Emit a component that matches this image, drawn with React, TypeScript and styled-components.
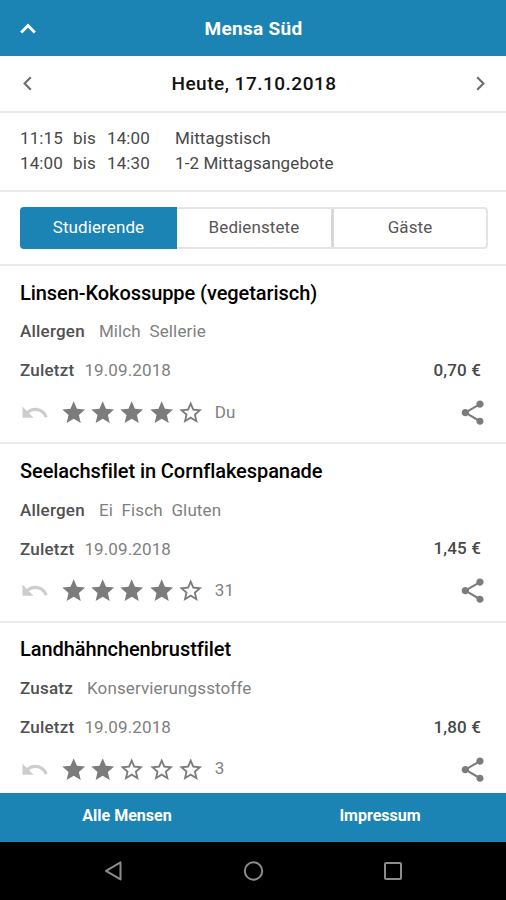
import React from "react";
import styled, { createGlobalStyle } from "styled-components";

const BLUE = "#1b84b5";

const GlobalStyle = createGlobalStyle`
  * { box-sizing: border-box; }
  body { margin: 0; background: #fff; font-family: Roboto, "Liberation Sans", sans-serif; }
  svg { display: block; flex: none; }
`;

const Screen = styled.div`
  display: flex;
  flex-direction: column;
  width: 506px;
  height: 900px;
  overflow: hidden;
  background: #fff;
  color: #111;
`;

const Header = styled.header`
  display: grid;
  grid-template-columns: 40px 1fr 40px;
  align-items: center;
  flex: none;
  height: 56px;
  padding: 1px 7px 0 8px;
  background: ${BLUE};
  color: #fff;
  svg { justify-self: center; }
`;

const Title = styled.h1`
  margin: 0;
  text-align: center;
  font-size: 19px;
  font-weight: 700;
  line-height: 24px;
  letter-spacing: 0.3px;
`;

const DateBar = styled.div`
  display: grid;
  grid-template-columns: 40px 1fr 40px;
  align-items: center;
  flex: none;
  height: 57px;
  padding: 0 5px 0 7px;
  border-bottom: 2px solid #ebebeb;
  svg { justify-self: center; }
`;

const DateLabel = styled.div`
  text-align: center;
  font-size: 19px;
  font-weight: 500;
  line-height: 24px;
  letter-spacing: 0.5px;
`;

const Hours = styled.div`
  display: grid;
  grid-template-columns: 53px 34px 68px 1fr;
  grid-auto-rows: 25px;
  flex: none;
  height: 79px;
  padding: 13px 20px 0;
  border-bottom: 2px solid #ebebeb;
  color: #484848;
  font-size: 17px;
  line-height: 25px;
  letter-spacing: 0.1px;
`;

const Time = styled.span`
  white-space: nowrap;
`;

const TabBar = styled.div`
  flex: none;
  height: 74px;
  padding: 15px 18px 0 20px;
  border-bottom: 2px solid #ebebeb;
`;

const Tabs = styled.div`
  display: grid;
  grid-template-columns: 155px 154px 1fr;
  height: 42px;
  border: 2px solid #e4e4e4;
  border-radius: 4px;
`;

const Tab = styled.button<{ $active?: boolean }>`
  margin: ${(p) => (p.$active ? "-2px 0 -2px -2px" : "0")};
  padding: 0 0 2px;
  border: 0;
  border-radius: ${(p) => (p.$active ? "4px 0 0 4px" : "0")};
  background: ${(p) => (p.$active ? BLUE : "transparent")};
  color: ${(p) => (p.$active ? "#fff" : "#565656")};
  font: 400 17px/24px Roboto, sans-serif;
  letter-spacing: 0.1px;
  & + &:last-child { border-left: 3px solid #d8d8d8; }
`;

const Menu = styled.main`
  flex: 1;
  min-height: 0;
  overflow: hidden;
`;

const Dish = styled.article`
  display: flex;
  flex-direction: column;
  height: 178.4px;
  padding: 14.7px 20px 0;
  border-bottom: 2px solid #ebebeb;
`;

const DishName = styled.h2`
  margin: 0 0 13.3px;
  font-size: 20px;
  font-weight: 500;
  line-height: 25px;
  letter-spacing: -0.07px;
  color: #000;
`;

const Line = styled.div<{ $gap: number }>`
  display: flex;
  align-items: center;
  gap: ${(p) => p.$gap}px;
  height: 25px;
  margin-bottom: 14px;
  font-size: 17px;
`;

const Label = styled.span`
  color: #505050;
  font-weight: 500;
  letter-spacing: 0.22px;
`;

const Value = styled.span`
  color: #808080;
  letter-spacing: 0.12px;
  white-space: pre;
`;

const Price = styled.span`
  margin: -1px 5px 0 auto;
  color: #484848;
  font-weight: 500;
  letter-spacing: 0.15px;
`;

const RatingRow = styled.div`
  display: flex;
  align-items: center;
  height: 30px;
  margin: 0.6px -1.4px 0 0;
`;

const Stars = styled.div`
  display: flex;
  gap: 2.1px;
  margin-left: 10px;
`;

const Count = styled.span`
  margin: -2px auto 0 10px;
  color: #808080;
  font-size: 17px;
`;

const Footer = styled.nav`
  display: flex;
  flex: none;
  height: 49px;
  background: ${BLUE};
`;

const FooterLink = styled.a`
  flex: 1;
  padding: 11px 0 0 1px;
  color: #fff;
  text-align: center;
  font-size: 16px;
  font-weight: 700;
  line-height: 24px;
`;

const SystemBar = styled.div`
  display: flex;
  align-items: center;
  justify-content: center;
  gap: 119px;
  flex: none;
  height: 58px;
  background: #000;
`;

const Chevron = ({ d, w, h, stroke, sw }: { d: string; w: number; h: number; stroke: string; sw: number }) => (
  <svg width={w} height={h} viewBox={`0 0 ${w} ${h}`} fill="none" stroke={stroke} strokeWidth={sw}>
    <path d={d} />
  </svg>
);

const UndoIcon = () => (
  <svg width="29.5" height="29.5" viewBox="0 0 24 24" fill="#cdcdcd">
    <path d="M12.5 8c-2.65 0-5.05.99-6.9 2.6L2 7v9h9l-3.62-3.62c1.39-1.16 3.16-1.88 5.12-1.88 3.54 0 6.55 2.31 7.6 5.5l2.37-.78C21.08 11.03 17.15 8 12.5 8z" />
  </svg>
);

const Star = ({ filled }: { filled: boolean }) => (
  <svg width="27.4" height="27.4" viewBox="0 0 24 24" fill="#7c7c7c">
    {filled ? (
      <path d="M12 17.27 18.18 21l-1.64-7.03L22 9.24l-7.19-.61L12 2 9.19 8.63 2 9.24l5.46 4.73L5.82 21z" />
    ) : (
      <path d="m22 9.24-7.19-.62L12 2 9.19 8.63 2 9.24l5.46 4.73L5.82 21 12 17.27 18.18 21l-1.63-7.03L22 9.24zM12 15.4l-3.76 2.27 1-4.28-3.32-2.88 4.38-.38L12 6.1l1.71 4.04 4.38.38-3.32 2.88 1 4.28L12 15.4z" />
    )}
  </svg>
);

const ShareIcon = () => (
  <svg width="29.3" height="29.3" viewBox="0 0 24 24" fill="#7c7c7c">
    <path d="M18 16.08c-.76 0-1.44.3-1.96.77L8.91 12.7c.05-.23.09-.46.09-.7s-.04-.47-.09-.7l7.05-4.11c.54.5 1.25.81 2.04.81 1.66 0 3-1.34 3-3s-1.34-3-3-3-3 1.34-3 3c0 .24.04.47.09.7L8.04 9.81C7.5 9.31 6.79 9 6 9c-1.66 0-3 1.34-3 3s1.34 3 3 3c.79 0 1.5-.31 2.04-.81l7.12 4.16c-.05.21-.08.43-.08.65 0 1.61 1.31 2.92 2.92 2.92 1.61 0 2.92-1.31 2.92-2.92s-1.31-2.92-2.92-2.92z" />
  </svg>
);

const dishes = [
  { name: "Linsen-Kokossuppe (vegetarisch)", label: "Allergen", info: "Milch  Sellerie", price: "0,70 €", stars: 4, count: "Du" },
  { name: "Seelachsfilet in Cornflakespanade", label: "Allergen", info: "Ei  Fisch  Gluten", price: "1,45 €", stars: 4, count: "31" },
  { name: "Landhähnchenbrustfilet", label: "Zusatz", info: "Konservierungsstoffe", price: "1,80 €", stars: 2, count: "3" },
];

const hours = [
  ["11:15", "14:00", "Mittagstisch"],
  ["14:00", "14:30", "1-2 Mittagsangebote"],
];

export default function App() {
  return (
    <Screen>
      <GlobalStyle />
      <Header>
        <Chevron d="M1.2 9.4 8 2.6l6.8 6.8" w={16} h={11} stroke="#fff" sw={2.8} />
        <Title>Mensa Süd</Title>
      </Header>
      <DateBar>
        <Chevron d="M8.8 1.2 2.6 7.5l6.2 6.3" w={10} h={15} stroke="#6c6c6c" sw={2.1} />
        <DateLabel>Heute, 17.10.2018</DateLabel>
        <Chevron d="M1.2 1.2l6.2 6.3-6.2 6.3" w={10} h={15} stroke="#6c6c6c" sw={2.1} />
      </DateBar>
      <Hours>
        {hours.map(([from, to, what]) => (
          <React.Fragment key={from}>
            <Time>{from}</Time>
            <Time>bis</Time>
            <Time>{to}</Time>
            <Time>{what}</Time>
          </React.Fragment>
        ))}
      </Hours>
      <TabBar>
        <Tabs>
          <Tab $active>Studierende</Tab>
          <Tab>Bedienstete</Tab>
          <Tab>Gäste</Tab>
        </Tabs>
      </TabBar>
      <Menu>
        {dishes.map((d) => (
          <Dish key={d.name}>
            <DishName>{d.name}</DishName>
            <Line $gap={14}>
              <Label>{d.label}</Label>
              <Value>{d.info}</Value>
            </Line>
            <Line $gap={10}>
              <Label>Zuletzt</Label>
              <Value>19.09.2018</Value>
              <Price>{d.price}</Price>
            </Line>
            <RatingRow>
              <UndoIcon />
              <Stars>
                {[0, 1, 2, 3, 4].map((i) => (
                  <Star key={i} filled={i < d.stars} />
                ))}
              </Stars>
              <Count>{d.count}</Count>
              <ShareIcon />
            </RatingRow>
          </Dish>
        ))}
      </Menu>
      <Footer>
        <FooterLink>Alle Mensen</FooterLink>
        <FooterLink>Impressum</FooterLink>
      </Footer>
      <SystemBar>
        <svg width="20" height="22" viewBox="0 0 20 22" fill="none" stroke="#8c8c8c" strokeWidth="2" strokeLinejoin="round">
          <path d="M17.5 2.4v17L3 10.9z" />
        </svg>
        <svg width="22" height="22" viewBox="0 0 22 22" fill="none" stroke="#8c8c8c" strokeWidth="2">
          <circle cx="11.5" cy="11" r="8.7" />
        </svg>
        <svg width="20" height="20" viewBox="0 0 20 20" fill="none" stroke="#8c8c8c" strokeWidth="2">
          <rect x="2" y="2" width="16" height="16" rx="1" />
        </svg>
      </SystemBar>
    </Screen>
  );
}
